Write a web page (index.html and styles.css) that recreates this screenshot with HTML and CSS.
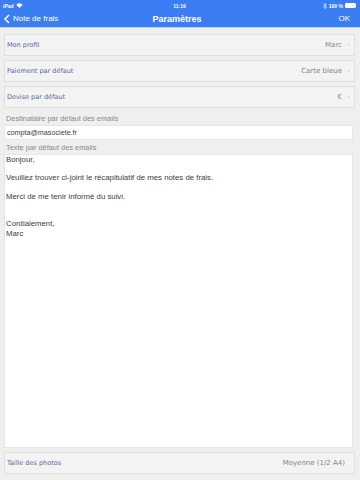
FILE: index.html
```html
<!DOCTYPE html>
<html lang="fr">
<head>
    <meta charset="UTF-8">
    <title>Paramètres</title>
    <link rel="stylesheet" href="styles.css">
</head>
<body>
    <div class="header">
        <div class="status-bar">
            <span class="carrier">iPad
                <svg class="wifi" width="7" height="5" viewBox="0 0 14 10"><path d="M7 10 L0.5 3.5 A9.5 9.5 0 0 1 13.5 3.5 Z" fill="#fff"/></svg>
            </span>
            <span class="clock">11:19</span>
            <span class="battery-info">
                <svg width="4" height="6" viewBox="0 0 8 12"><path d="M1 3 L7 9 L4 11 L4 1 L7 3 L1 9" fill="none" stroke="#fff" stroke-width="1.2"/></svg>
                100 %
                <span class="battery"><span class="battery-level"></span></span>
            </span>
        </div>
        <div class="nav-bar">
            <a class="nav-back" href="#">
                <svg width="6" height="10" viewBox="0 0 6 10"><path d="M5 1 L1 5 L5 9" fill="none" stroke="#fff" stroke-width="1.5"/></svg>
                Note de frais
            </a>
            <span class="nav-title">Paramètres</span>
            <a class="nav-ok" href="#">OK</a>
        </div>
    </div>

    <div class="content">
        <div class="setting-row">
            <span class="setting-label">Mon profil</span>
            <span class="setting-value">Marc <span class="chevron">›</span></span>
        </div>
        <div class="setting-row">
            <span class="setting-label">Paiement par défaut</span>
            <span class="setting-value">Carte bleue <span class="chevron">›</span></span>
        </div>
        <div class="setting-row">
            <span class="setting-label">Devise par défaut</span>
            <span class="setting-value">€ <span class="chevron">›</span></span>
        </div>

        <div class="field-label first">Destinataire par défaut des emails</div>
        <div class="text-input">compta@masociete.fr</div>

        <div class="field-label">Texte par défaut des emails</div>
        <div class="text-area">Bonjour,

Veuillez trouver ci-joint le récapitulatif de mes notes de frais.

Merci de me tenir informé du suivi.


Cordialement,
Marc</div>

        <div class="setting-row last">
            <span class="setting-label">Taille des photos</span>
            <span class="setting-value">Moyenne (1/2 A4)</span>
        </div>
    </div>
</body>
</html>
```

FILE: styles.css
```css
body {
    margin: 0;
    width: 360px;
    height: 480px;
    background-color: #efefef;
    font-family: "DejaVu Sans", Verdana, sans-serif;
    overflow: hidden;
}

.header {
    background-color: #3b7ef4;
    color: #fff;
    height: 27px;
    border-bottom: 1px solid #b9cdf0;
}

.status-bar {
    display: flex;
    justify-content: space-between;
    align-items: center;
    height: 9px;
    padding: 1px 4px 0 3px;
    font-family: "Liberation Sans", Arial, sans-serif;
    font-size: 5px;
    font-weight: bold;
}

.carrier, .battery-info {
    display: flex;
    align-items: center;
    gap: 2px;
    width: 60px;
}

.battery-info {
    justify-content: flex-end;
}

.battery {
    width: 9px;
    height: 3px;
    border: 1px solid #fff;
    border-radius: 1px;
}

.battery-level {
    display: block;
    width: 100%;
    height: 100%;
    background-color: #fff;
}

.nav-bar {
    display: flex;
    justify-content: space-between;
    align-items: center;
    height: 17px;
    padding: 0 10px 0 4px;
    font-family: "Liberation Sans", Arial, sans-serif;
    font-size: 8px;
}

.nav-bar a {
    color: #fff;
    text-decoration: none;
}

.nav-back {
    display: flex;
    align-items: center;
    gap: 3px;
    width: 80px;
}

.nav-title {
    font-weight: bold;
    font-size: 9px;
}

.nav-ok {
    width: 80px;
    text-align: right;
}

.content {
    display: flex;
    flex-direction: column;
    padding: 6px 5px 0 4px;
}

.setting-row {
    display: flex;
    justify-content: space-between;
    align-items: center;
    height: 20px;
    margin-bottom: 4px;
    padding: 0 4px 0 2px;
    background-color: #f3f3f3;
    border: 1px solid #dedede;
    font-size: 6.5px;
}

.setting-row.last {
    margin-top: 4px;
    padding-right: 9px;
}

.setting-label {
    color: #52699a;
}

.setting-value {
    color: #858585;
    font-size: 7px;
}

.chevron {
    color: #c4c4c4;
    margin-left: 3px;
}

.field-label {
    color: #888;
    font-family: "Liberation Sans", Arial, sans-serif;
    font-size: 7.4px;
    line-height: 8px;
    margin: 4px 0 2px 2px;
}

.field-label.first {
    margin-top: 3px;
}

.text-input, .text-area {
    background-color: #fff;
    border: 1px solid #e6e6e6;
    font-family: "Liberation Sans", Arial, sans-serif;
    color: #3c3c3c;
    margin-right: 2px;
}

.text-input {
    height: 13px;
    line-height: 13px;
    padding: 0 2px;
    font-size: 7.2px;
}

.text-area {
    height: 292px;
    padding: 0 1px;
    font-size: 7.8px;
    line-height: 9.2px;
    white-space: pre-wrap;
}
```
